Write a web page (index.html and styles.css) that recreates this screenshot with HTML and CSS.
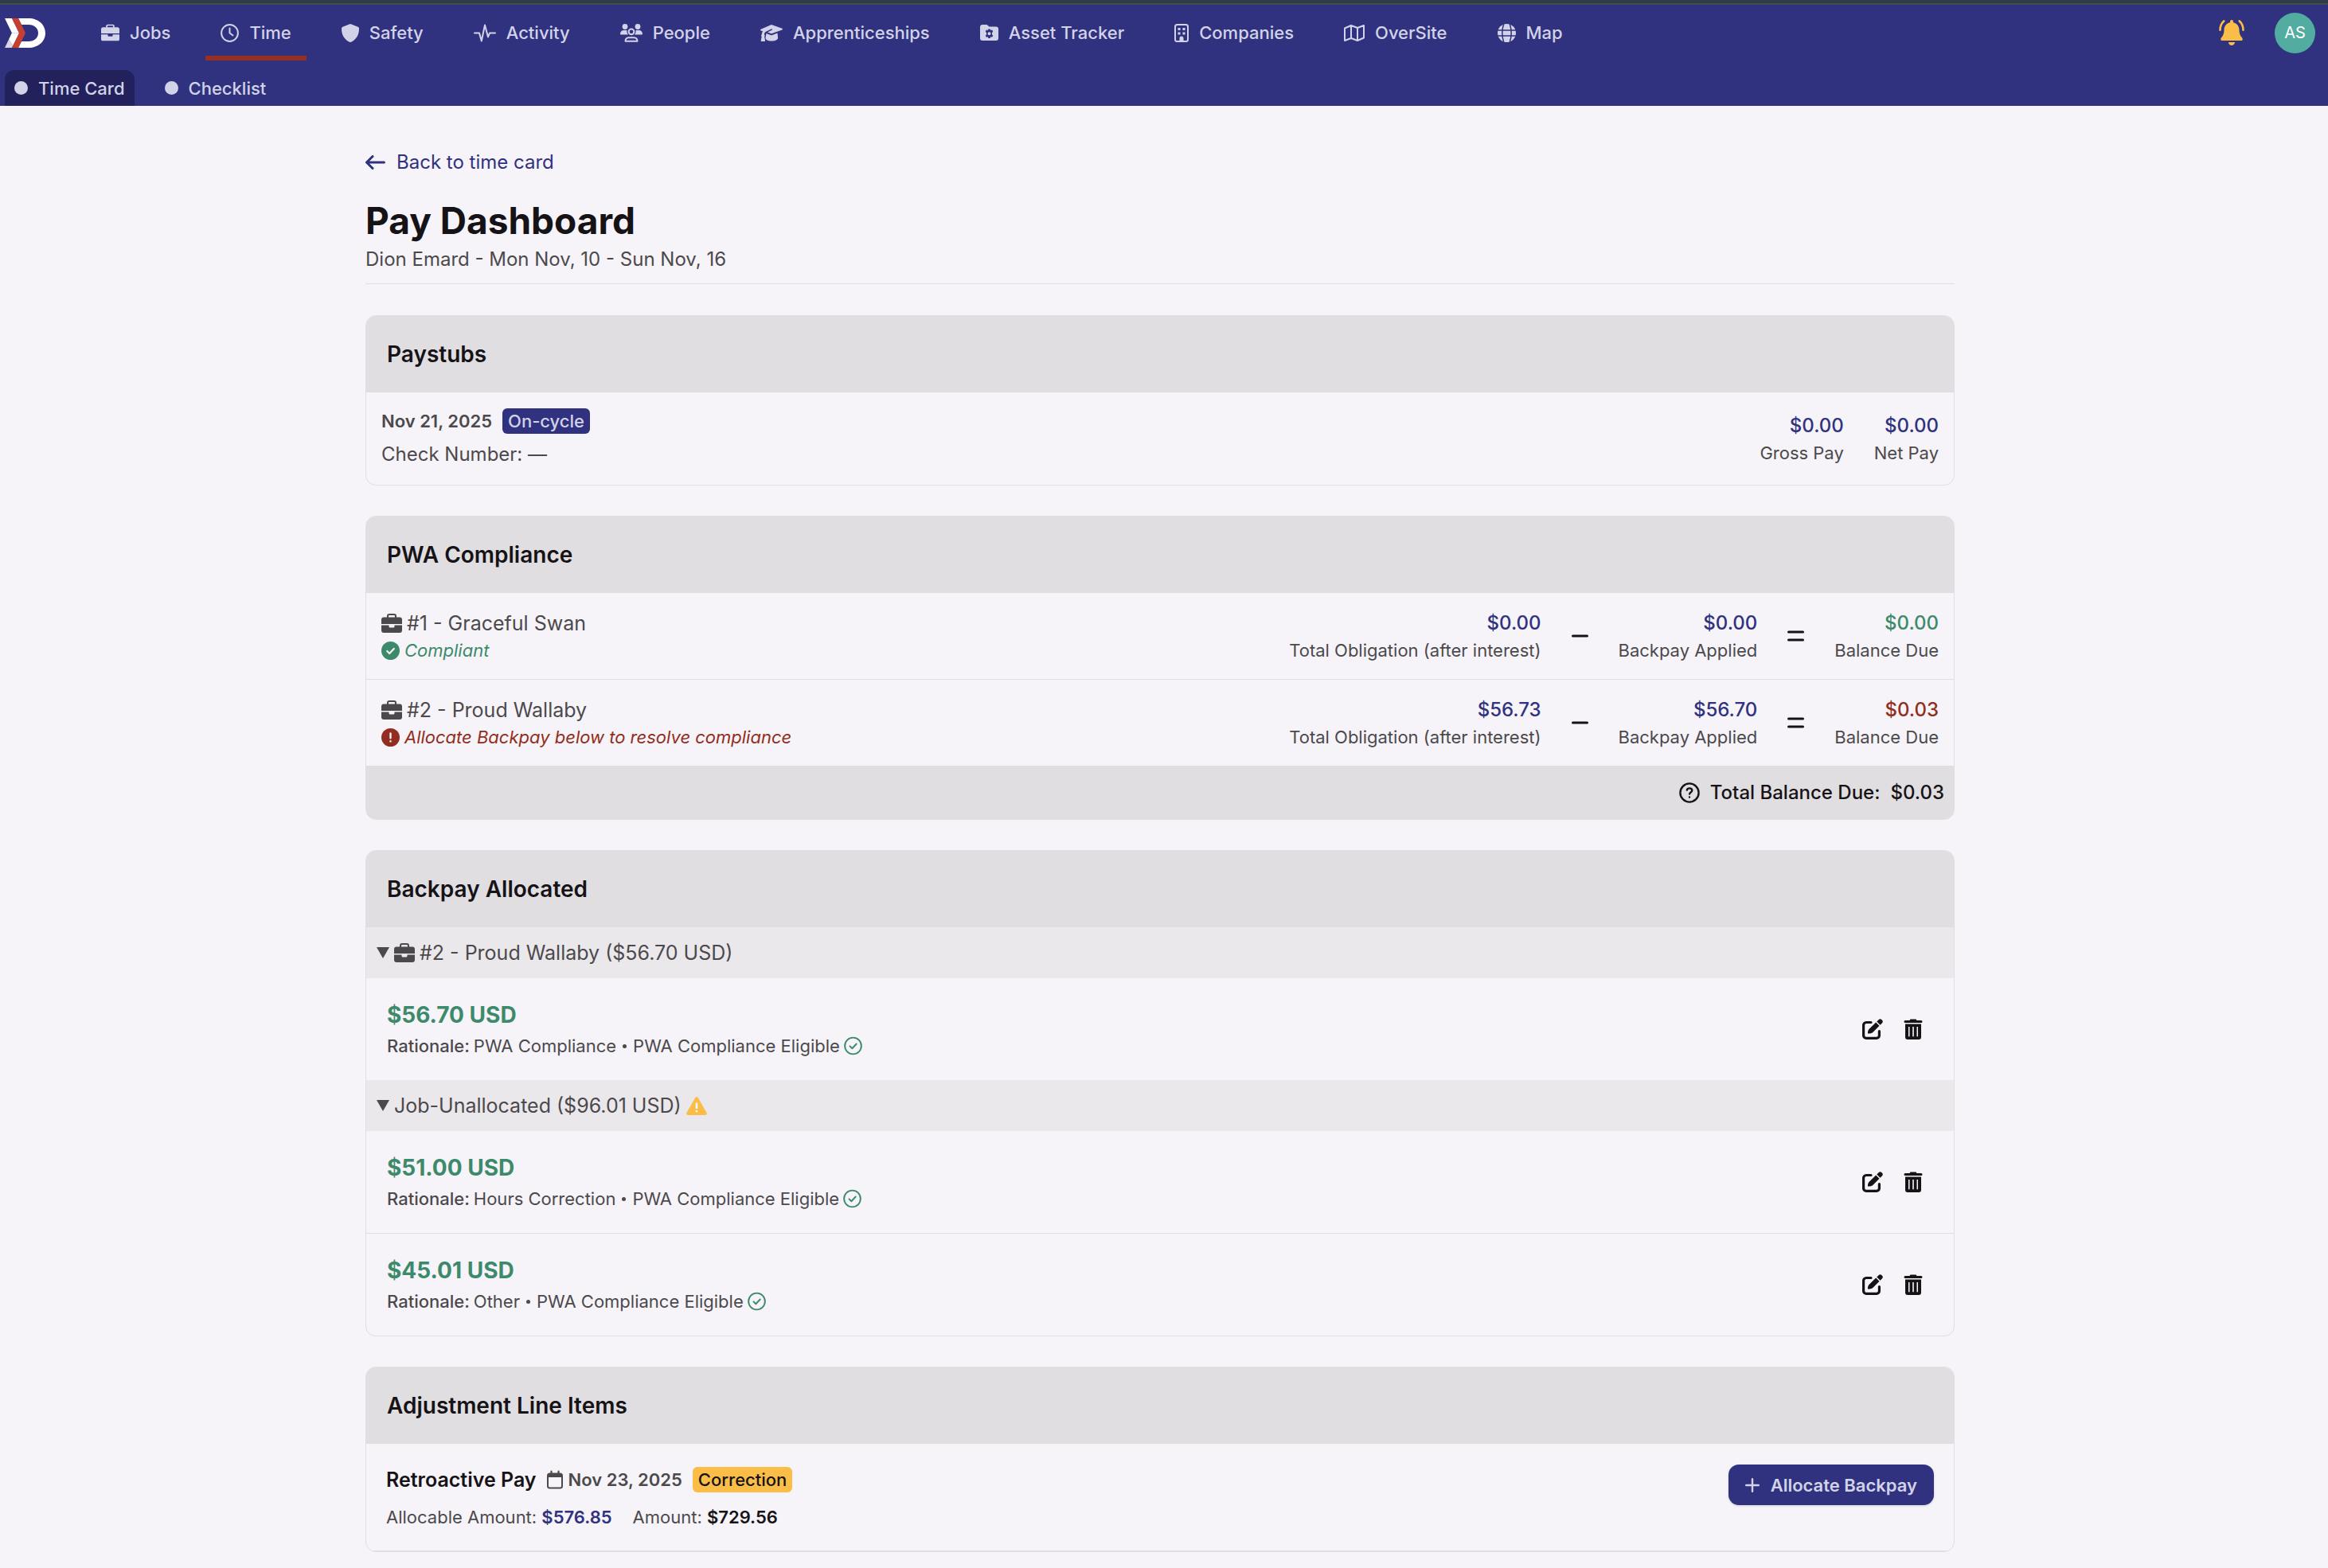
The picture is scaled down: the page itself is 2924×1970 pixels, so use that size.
FILE: index.html
```html
<!DOCTYPE html>
<html lang="en">
<head>
    <meta charset="UTF-8">
    <meta name="viewport" content="width=device-width, initial-scale=1.0">
    <title>Pay Dashboard</title>
    <link rel="stylesheet" href="styles.css">
</head>
<body>
    <!-- shared icons -->
    <svg class="sprite" aria-hidden="true">
        <symbol id="briefcase" viewBox="0 0 26 24">
            <path d="M8 5V3a2 2 0 0 1 2-2h6a2 2 0 0 1 2 2v2" fill="none" stroke="currentColor" stroke-width="2"/>
            <path d="M3 4.500h20a3 3 0 0 1 3 3V13H0V7.500a3 3 0 0 1 3-3z"/>
            <path d="M0 14.500h9.500V16a1.500 1.500 0 0 0 1.500 1.500h4a1.500 1.500 0 0 0 1.500-1.500v-1.500H26V21a3 3 0 0 1-3 3H3a3 3 0 0 1-3-3z"/>
        </symbol>
        <symbol id="check" viewBox="0 0 24 24">
            <circle cx="12" cy="12" r="10.800" fill="none" stroke="currentColor" stroke-width="2"/>
            <path d="M7.800 12.400l3 3 5.600-6" fill="none" stroke="currentColor" stroke-width="2" stroke-linecap="round" stroke-linejoin="round"/>
        </symbol>
        <symbol id="edit" viewBox="0 0 26 26">
            <path d="M11 4.500H5A3.400 3.400 0 0 0 1.600 8v13A3.400 3.400 0 0 0 5 24.400h13a3.400 3.400 0 0 0 3.400-3.400v-5.500" fill="none" stroke="currentColor" stroke-width="3.200" stroke-linecap="round"/>
            <path d="M17.200 4.500l4.300 4.300-8.200 8.100c-1.400 1.300-3.600 1.700-5.600 1.700-.6 0-.9-.3-.8-.9.200-2 .7-4.100 2.100-5.100z"/>
            <path d="M18.300 3.400l2.200-2.200a2.800 2.800 0 0 1 4 0l.3.300a2.800 2.800 0 0 1 0 4l-2.200 2.200z"/>
        </symbol>
        <symbol id="trash" viewBox="0 0 24 26">
            <path d="M2 2h5.500L8.500.6h7l1 1.400H22a1.300 1.300 0 0 1 0 3H2a1.300 1.300 0 0 1 0-3z"/>
            <path fill-rule="evenodd" d="M2 6.500h20V23a3 3 0 0 1-3 3H5a3 3 0 0 1-3-3zM6 10v12.200h1.500V10zM11.200 10v12.200h1.600V10zM16.500 10v12.200H18V10z"/>
        </symbol>
    </svg>

    <header class="header">
        <div class="topbar">
            <a href="#" class="logo" aria-label="Home">
                <svg width="51" height="37" viewBox="0 0 51 37">
                    <path d="M0 0h9l9 18.500h-9z" fill="#fff"/>
                    <path d="M9 18.500h9L9 37H0z" fill="#d8d6e6"/>
                    <path d="M9 18.500L5.500 26l5 7.800L18 18.500z" fill="#fff"/>
                    <path d="M17 0h13c12 0 21 8 21 18.500S42 37 30 37H17l4-8h9c7 0 12-4.500 12-10.500S37 8 30 8h-9z" fill="#fff"/>
                    <path d="M9 0h8l9 18.500L17 37H9l9-18.500z" fill="#c63f30"/>
                </svg>
            </a>
            <nav class="nav">
                <a href="#" class="nav-item">
                    <svg class="icon" width="23" height="22" viewBox="0 0 26 24"><use href="#briefcase"/></svg>
                    Jobs
                </a>
                <a href="#" class="nav-item active">
                    <svg class="icon" width="23" height="23" viewBox="0 0 23 23" fill="none" stroke="currentColor" stroke-width="2" stroke-linecap="round" stroke-linejoin="round"><circle cx="11.500" cy="11.500" r="10.400"/><path d="M11.500 5.500v6l4 3"/></svg>
                    Time
                </a>
                <a href="#" class="nav-item">
                    <svg class="icon" width="22" height="23" viewBox="0 0 22 23"><path d="M10.200.3a2 2 0 0 1 1.600 0l8.700 3.500c1 .4 1.500 1.200 1.500 2.200 0 6-2 13-9.900 16.700a2.400 2.400 0 0 1-2.200 0C2 19 0 12 0 6c0-1 .5-1.800 1.500-2.200z"/></svg>
                    Safety
                </a>
                <a href="#" class="nav-item">
                    <svg class="icon" width="28" height="23" viewBox="0 0 28 23" fill="none" stroke="currentColor" stroke-width="2" stroke-linecap="round" stroke-linejoin="round"><path d="M1 11.500h6L9.800 21.500 14 1.500l4 15 2-5h7"/></svg>
                    Activity
                </a>
                <a href="#" class="nav-item">
                    <svg class="icon" width="28" height="23" viewBox="0 0 28 23"><circle cx="6" cy="3.500" r="3.400"/><circle cx="22" cy="3.500" r="3.400"/><path d="M4.500 8h4c-.5 2 .3 4 1.500 5.500H1c-.6 0-1-.4-1-1C0 10 2 8 4.500 8zM19.500 8h4c2.500 0 4.500 2 4.500 4.500 0 .6-.4 1-1 1h-9C19.200 12 20 10 19.500 8z"/><circle cx="14" cy="9.800" r="3.400" fill="none" stroke="currentColor" stroke-width="2"/><path d="M6.500 21.700c0-2.500 1.700-4.500 4-4.500h7c2.300 0 4 2 4 4.500z" fill="none" stroke="currentColor" stroke-width="2" stroke-linejoin="round"/></svg>
                    People
                </a>
                <a href="#" class="nav-item">
                    <svg class="icon" width="28" height="22" viewBox="0 0 28 22"><path d="M13.300 1.200a2 2 0 0 1 1.400 0l12.600 4.500c.9.300.9 1.500 0 1.800l-12.600 4.600a2 2 0 0 1-1.400 0L9 10.600l5.500-2.800c1-.5.300-1.900-.7-1.400L7 9.800C5.500 10.600 5 12 4.900 13.500c1 .7 1 1.800.2 2.500l1 5c.1.500-.2.900-.7.900H1.400c-.5 0-.8-.4-.7-.9l1-5c-.8-.7-.8-1.800.1-2.500 0-1.600.5-3 1.300-4.200L.7 8.500c-.9-.3-.9-1.500 0-1.800z"/><path d="M7.500 12l5.300 1.900c.8.300 1.600.3 2.400 0l6.300-2.300.6 6c0 2.500-3.600 4-8 4s-7.600-1.500-7.600-4z"/></svg>
                    Apprenticeships
                </a>
                <a href="#" class="nav-item">
                    <svg class="icon" width="23" height="20" viewBox="0 0 23 20"><path fill-rule="evenodd" d="M3 0h5.500l3 2.500H20a3 3 0 0 1 3 3V17a3 3 0 0 1-3 3H3a3 3 0 0 1-3-3V3a3 3 0 0 1 3-3zM10.300 5.500l-.5 1.600-1.900-.5-1.200 2.100 1.300 1.400v2.300l-1.300 1.300 1.200 2.100 1.900-.5.500 1.700h2.400l.5-1.700 1.900.5 1.200-2.100-1.300-1.300v-2.300l1.300-1.400-1.200-2.100-1.900.5-.5-1.600zM11.500 9.200a2 2 0 1 1 0 4 2 2 0 0 1 0-4z"/></svg>
                    Asset Tracker
                </a>
                <a href="#" class="nav-item">
                    <svg class="icon" width="18" height="23" viewBox="0 0 18 23"><rect x="1" y="1" width="16" height="21" rx="2.500" fill="none" stroke="currentColor" stroke-width="2"/><path d="M4.500 5h3v3h-3zM10.500 5h3v3h-3zM4.500 10.500h3v3h-3zM10.500 10.500h3v3h-3zM6.500 22v-4a2.500 2.500 0 0 1 5 0v4z"/></svg>
                    Companies
                </a>
                <a href="#" class="nav-item">
                    <svg class="icon" width="26" height="21" viewBox="0 0 26 21" fill="none" stroke="currentColor" stroke-width="2" stroke-linejoin="round"><path d="M1 4.500L9 1l8 3 8-3v15.500L17 20l-8-3-8 3zM9 1v16M17 4v16"/></svg>
                    OverSite
                </a>
                <a href="#" class="nav-item">
                    <svg class="icon" width="23" height="23" viewBox="0 0 23 23"><circle cx="11.500" cy="11.500" r="11.500"/><path d="M0 8h23M0 15h23M7.700 0c-2.300 7-2.300 16 0 23M15.300 0c2.300 7 2.300 16 0 23" fill="none" stroke="#31327f" stroke-width="1.500"/></svg>
                    Map
                </a>
            </nav>
            <button class="bell" aria-label="Notifications">
                <svg width="32" height="32" viewBox="0 0 32 32"><path d="M16 0a2 2 0 0 1 2 2v1.300c4.400.9 7.500 4.500 7.500 9.200 0 4.500 1 7 3.800 10.300.9 1.200.4 3.200-1.300 3.200H4c-1.700 0-2.200-2-1.300-3.200C5.500 19.500 6.500 17 6.500 12.500c0-4.700 3.100-8.300 7.500-9.200V2a2 2 0 0 1 2-2zM12 28h8c0 2.300-1.600 4-4 4s-4-1.700-4-4z"/><path d="M6.200 1.500C3 4.500 1.500 8 1.500 12.700M25.800 1.500c3.200 3 4.700 6.500 4.700 11.200" fill="none" stroke="currentColor" stroke-width="2.600" stroke-linecap="round"/></svg>
            </button>
            <button class="avatar">AS</button>
        </div>
        <nav class="subnav">
            <a href="#" class="tab current"><span class="dot"></span>Time Card</a>
            <a href="#" class="tab"><span class="dot"></span>Checklist</a>
        </nav>
    </header>

    <main class="main">
        <div class="container">
            <a href="#" class="back">
                <svg width="25" height="18" viewBox="0 0 25 18" fill="none" stroke="currentColor" stroke-width="3" stroke-linecap="round" stroke-linejoin="round"><path d="M23.500 9H2M9 1.500L1.500 9 9 16.500"/></svg>
                Back to time card
            </a>
            <div class="page-title">
                <h1>Pay Dashboard</h1>
                <p>Dion Emard - Mon Nov, 10 - Sun Nov, 16</p>
            </div>

            <section class="card">
                <h2>Paystubs</h2>
                <div class="row">
                    <div class="stub">
                        <div class="stub-date"><strong>Nov 21, 2025</strong><span class="badge">On-cycle</span></div>
                        <p>Check Number: —</p>
                    </div>
                    <div class="figures">
                        <div class="figure"><span class="amount">$0.00</span><span class="label">Gross Pay</span></div>
                        <div class="figure"><span class="amount">$0.00</span><span class="label">Net Pay</span></div>
                    </div>
                </div>
            </section>

            <section class="card">
                <h2>PWA Compliance</h2>
                <div class="row">
                    <div>
                        <p class="job"><svg width="26" height="24"><use href="#briefcase"/></svg>#1 - Graceful Swan</p>
                        <p class="status green">
                            <svg width="23" height="23" viewBox="0 0 23 23"><circle cx="11.500" cy="11.500" r="11.500"/><path d="M7.200 12l3 3 5.600-6" fill="none" stroke="#f6f4f8" stroke-width="2.200" stroke-linecap="round" stroke-linejoin="round"/></svg>
                            <em>Compliant</em>
                        </p>
                    </div>
                    <div class="figures">
                        <div class="figure"><span class="amount">$0.00</span><span class="label">Total Obligation (after interest)</span></div>
                        <svg class="sign" width="21" height="12" viewBox="0 0 21 12"><path d="M1.500 6h18"/></svg>
                        <div class="figure"><span class="amount">$0.00</span><span class="label">Backpay Applied</span></div>
                        <svg class="sign" width="21" height="14" viewBox="0 0 21 14"><path d="M1.500 2h18M1.500 12h18"/></svg>
                        <div class="figure"><span class="amount green">$0.00</span><span class="label">Balance Due</span></div>
                    </div>
                </div>
                <div class="row">
                    <div>
                        <p class="job"><svg width="26" height="24"><use href="#briefcase"/></svg>#2 - Proud Wallaby</p>
                        <p class="status red">
                            <svg width="23" height="23" viewBox="0 0 23 23"><circle cx="11.500" cy="11.500" r="11.500"/><path d="M11.500 6.500v5.800M11.500 16.200v.2" stroke="#f6f4f8" stroke-width="2.400" stroke-linecap="round"/></svg>
                            <em>Allocate Backpay below to resolve compliance</em>
                        </p>
                    </div>
                    <div class="figures">
                        <div class="figure"><span class="amount">$56.73</span><span class="label">Total Obligation (after interest)</span></div>
                        <svg class="sign" width="21" height="12" viewBox="0 0 21 12"><path d="M1.500 6h18"/></svg>
                        <div class="figure"><span class="amount">$56.70</span><span class="label">Backpay Applied</span></div>
                        <svg class="sign" width="21" height="14" viewBox="0 0 21 14"><path d="M1.500 2h18M1.500 12h18"/></svg>
                        <div class="figure"><span class="amount red">$0.03</span><span class="label">Balance Due</span></div>
                    </div>
                </div>
                <div class="total">
                    <button class="help" aria-label="Help">
                        <svg width="26" height="26" viewBox="0 0 26 26" fill="none" stroke="currentColor" stroke-width="2.400" stroke-linecap="round" stroke-linejoin="round"><circle cx="13" cy="13" r="11.600"/><path d="M9.800 9.600c.4-1.500 1.400-2.200 3.200-2.200 2 0 3.300 1.100 3.300 2.700 0 2.300-3.200 2.400-3.200 4.500M13 18.400v.2"/></svg>
                    </button>
                    <span>Total Balance Due:</span>
                    <span>$0.03</span>
                </div>
            </section>

            <section class="card">
                <h2>Backpay Allocated</h2>
                <details open>
                    <summary>
                        <svg width="16" height="14" viewBox="0 0 16 14"><path d="M0 0h16L8 14z"/></svg>
                        <svg width="26" height="24"><use href="#briefcase"/></svg>
                        #2 - Proud Wallaby ($56.70 USD)
                    </summary>
                    <div class="item">
                        <div>
                            <p class="usd">$56.70 USD</p>
                            <p class="rationale"><strong>Rationale:</strong> PWA Compliance <span class="bullet"></span> PWA Compliance Eligible <svg width="23" height="24"><use href="#check"/></svg></p>
                        </div>
                        <div class="actions">
                            <button aria-label="Edit"><svg width="26" height="26"><use href="#edit"/></svg></button>
                            <button aria-label="Delete"><svg width="24" height="26"><use href="#trash"/></svg></button>
                        </div>
                    </div>
                </details>
                <details open>
                    <summary>
                        <svg width="16" height="14" viewBox="0 0 16 14"><path d="M0 0h16L8 14z"/></svg>
                        Job-Unallocated ($96.01 USD)
                        <svg width="26" height="23" viewBox="0 0 26 23"><path d="M11.300 1a2 2 0 0 1 3.400 0l10.900 19c.8 1.400-.1 3-1.700 3H2.100C.5 23-.4 21.400.4 20z" fill="#fabe48"/><path d="M13 8.500v5.500M13 18v.2" stroke="#f6f4f8" stroke-width="2.600" stroke-linecap="round"/></svg>
                    </summary>
                    <div class="item">
                        <div>
                            <p class="usd">$51.00 USD</p>
                            <p class="rationale"><strong>Rationale:</strong> Hours Correction <span class="bullet"></span> PWA Compliance Eligible <svg width="23" height="24"><use href="#check"/></svg></p>
                        </div>
                        <div class="actions">
                            <button aria-label="Edit"><svg width="26" height="26"><use href="#edit"/></svg></button>
                            <button aria-label="Delete"><svg width="24" height="26"><use href="#trash"/></svg></button>
                        </div>
                    </div>
                    <div class="item">
                        <div>
                            <p class="usd">$45.01 USD</p>
                            <p class="rationale"><strong>Rationale:</strong> Other <span class="bullet"></span> PWA Compliance Eligible <svg width="23" height="24"><use href="#check"/></svg></p>
                        </div>
                        <div class="actions">
                            <button aria-label="Edit"><svg width="26" height="26"><use href="#edit"/></svg></button>
                            <button aria-label="Delete"><svg width="24" height="26"><use href="#trash"/></svg></button>
                        </div>
                    </div>
                </details>
            </section>

            <section class="card">
                <h2>Adjustment Line Items</h2>
                <div class="adjustment">
                    <div>
                        <div class="adjustment-title">
                            <h3>Retroactive Pay</h3>
                            <span class="date">
                                <svg width="20" height="24" viewBox="0 0 20 24"><path d="M5.500 1.500v4M14.500 1.500v4" stroke="currentColor" stroke-width="2.200" stroke-linecap="round"/><rect x="1" y="4.500" width="18" height="18" rx="2.500" fill="none" stroke="currentColor" stroke-width="2"/><path d="M1 5h18v4H1z"/></svg>
                                Nov 23, 2025
                            </span>
                            <span class="badge yellow">Correction</span>
                        </div>
                        <div class="amounts">
                            <span>Allocable Amount: <strong class="blue">$576.85</strong></span>
                            <span>Amount: <strong>$729.56</strong></span>
                        </div>
                    </div>
                    <button class="allocate">
                        <svg width="18" height="18" viewBox="0 0 18 18" fill="none" stroke="currentColor" stroke-width="2.400" stroke-linecap="round"><path d="M9 1.200v15.600M1.200 9h15.600"/></svg>
                        Allocate Backpay
                    </button>
                </div>
            </section>
        </div>
    </main>
</body>
</html>
```
FILE: styles.css
```css
*{
 box-sizing: border-box;
 margin: 0;
 padding: 0;
}
body{
 font-family: Inter, "Liberation Sans", sans-serif;
 font-size: 24px;
 line-height: 36px;
 color: #4c494d;
 background-color: #f6f4f8;
}
a{
 color: inherit;
 text-decoration: none;
}
button{
 font: inherit;
 color: inherit;
 border: none;
 background: none;
 cursor: pointer;
}
svg{
 display: block;
 flex-shrink: 0;
 fill: currentColor;
}
svg[fill="none"]{
 fill: none;
}
.sprite{
 position: absolute;
 width: 0;
 height: 0;
}

/* header */
.header{
 background-color: #31327f;
 color: #d2d3e8;
 font-size: 22px;
 font-weight: 500;
 border-top: 4px solid #2e3c4a;
 box-shadow: inset 0 2px #484a50;
}
.topbar{
 display: flex;
 align-items: center;
 padding: 2px 16px 0 6px;
}
.nav{
 display: flex;
 gap: 25px;
 margin-left: 51px;
 flex: 1;
}
.nav-item{
 display: flex;
 align-items: center;
 gap: 13px;
 height: 70px;
 padding: 0 19px;
 border-top: 6px solid transparent;
 border-bottom: 6px solid transparent;
}
.nav-item.active{
 border-bottom-color: #963023;
}
.bell{
 margin-right: 38px;
 color: #fabe48;
}
.avatar{
 width: 51px;
 height: 51px;
 border-radius: 50%;
 background-color: #52aca0;
 color: white;
 font-size: 20px;
 font-weight: 400;
}
.subnav{
 display: flex;
 gap: 26px;
 padding: 12px 6px 0;
}
.tab{
 display: flex;
 align-items: center;
 gap: 13px;
 height: 45px;
 padding: 0 12px;
 border-radius: 12px 12px 0 0;
}
.tab.current{
 background-color: #22215c;
}
.dot{
 width: 17px;
 height: 17px;
 border-radius: 50%;
 background-color: #d2d3e8;
}

/* page */
.main{
 padding: 53px 30px 20px 20px;
}
.container{
 max-width: 1996px;
 margin: 0 auto;
}
.back{
 display: inline-flex;
 align-items: center;
 gap: 14px;
 color: #31327f;
}
.page-title{
 margin: 26px 0 39px;
 padding-bottom: 12px;
 border-bottom: 1px solid #e0dee1;
}
h1{
 margin-bottom: 3px;
 font-size: 46px;
 line-height: 56px;
 font-weight: 700;
 color: #161317;
}

/* cards */
.card{
 margin-bottom: 38px;
 border: 1px solid #e0dee1;
 border-radius: 13px;
 overflow: hidden;
}
h2{
 padding: 0 26px;
 font-size: 28px;
 line-height: 96px;
 font-weight: 600;
 color: #161317;
 background-color: #e0dee1;
}
.row{
 display: flex;
 justify-content: space-between;
 align-items: center;
 padding: 20px 19px;
}
.row:not(:last-child){
 border-bottom: 1px solid #e0dee1;
}
.stub-date{
 display: flex;
 align-items: center;
 gap: 13px;
 margin-bottom: 8px;
 font-size: 22px;
 line-height: 32px;
}
.stub-date strong{
 font-weight: 600;
}
.badge{
 padding: 0 7px;
 border-radius: 6px;
 background-color: #31327f;
 color: #d2d3e8;
 font-size: 22px;
 line-height: 32px;
 font-weight: 500;
}
.badge.yellow{
 background-color: #fabe48;
 color: #161317;
}
.figures{
 display: flex;
 align-items: center;
 gap: 38px;
}
.figure{
 display: flex;
 flex-direction: column;
 align-items: flex-end;
}
.amount{
 color: #31327f;
 font-weight: 500;
}
.label{
 font-size: 22px;
 line-height: 32px;
}
.sign{
 stroke: #161317;
 stroke-width: 3;
 stroke-linecap: round;
}
.green{
 color: #3c8a6b;
}
.red{
 color: #922d20;
}
.job{
 display: flex;
 align-items: center;
 gap: 6px;
 font-size: 25px;
}
.status{
 display: flex;
 align-items: center;
 gap: 6px;
 font-size: 22px;
 line-height: 32px;
}
.total{
 display: flex;
 justify-content: flex-end;
 align-items: center;
 gap: 13px;
 padding: 15px 12px;
 background-color: #e0dee1;
 color: #161317;
 font-weight: 500;
}

/* backpay */
summary{
 display: flex;
 align-items: center;
 gap: 6px;
 padding: 14px 13px;
 font-size: 25px;
 background-color: #eae8eb;
 cursor: pointer;
}
.item{
 display: flex;
 justify-content: space-between;
 align-items: center;
 padding: 25px 26px;
}
.item + .item{
 border-top: 1px solid #e0dee1;
}
.usd{
 font-size: 28px;
 line-height: 42px;
 font-weight: 700;
 color: #3c8a6b;
}
.rationale{
 display: flex;
 align-items: center;
 gap: 5px;
 font-size: 22px;
}
.rationale strong{
 font-weight: 500;
}
.rationale svg{
 color: #3c8a6b;
}
.bullet{
 width: 5px;
 height: 5px;
 margin: 0 3px;
 border-radius: 50%;
 background-color: #4c494d;
}
.actions{
 display: flex;
 color: #161317;
}
.actions button{
 display: flex;
 justify-content: center;
 width: 51px;
}

/* adjustments */
.adjustment{
 display: flex;
 justify-content: space-between;
 align-items: flex-start;
 padding: 26px 25px;
 border-bottom: 1px solid #e0dee1;
}
.adjustment-title{
 display: flex;
 align-items: center;
 gap: 13px;
 margin-bottom: 12px;
 line-height: 38px;
}
h3{
 font-size: 25px;
 font-weight: 600;
 color: #161317;
}
.date{
 display: flex;
 align-items: center;
 gap: 7px;
 font-size: 22px;
 font-weight: 600;
}
.amounts{
 display: flex;
 gap: 26px;
 font-size: 22px;
 line-height: 32px;
}
.amounts strong{
 font-weight: 600;
 color: #161317;
}
.amounts .blue{
 color: #31327f;
}
.allocate{
 display: flex;
 align-items: center;
 gap: 14px;
 height: 51px;
 padding: 0 21px;
 border-radius: 13px;
 background-color: #31327f;
 color: #d2d3e8;
 font-size: 22px;
 font-weight: 600;
 box-shadow: 0 1px 3px rgba(0, 0, 0, 0.15);
}
```
